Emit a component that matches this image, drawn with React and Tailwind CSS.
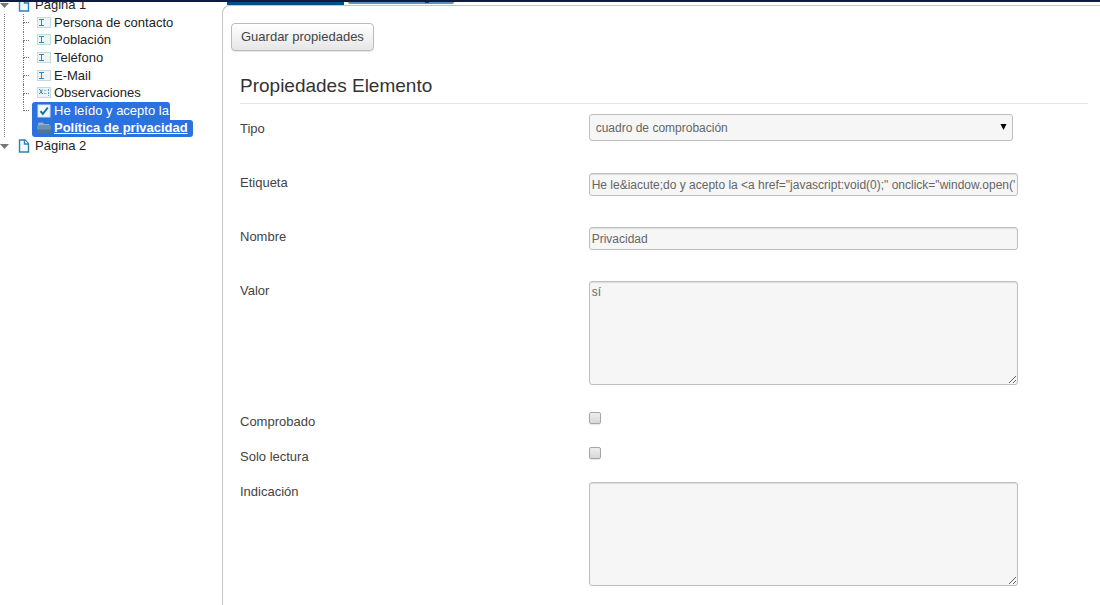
import { useState } from 'react'

const FIELDS = [
  { label: 'Persona de contacto', icon: 'input' },
  { label: 'Población', icon: 'input' },
  { label: 'Teléfono', icon: 'input' },
  { label: 'E-Mail', icon: 'input' },
  { label: 'Observaciones', icon: 'area' },
]

const LINK_HTML =
  'He le&iacute;do y acepto la <a href="javascript:void(0);" onclick="window.open(\'index.php\')">'

const controlClass =
  'block w-[86%] rounded-[3px] border border-[#bfbfbf] bg-[#f6f6f6] px-[2px] text-[12px] text-[#666] shadow-[inset_0_1px_1px_rgba(0,0,0,0.1)] outline-none'

function PageIcon() {
  return (
    <svg className="h-[14px] w-[12px] shrink-0" viewBox="0 0 12 14" fill="none">
      <path d="M1.5 1H7l3.5 3.5V13h-9z" fill="#f2f9fe" stroke="#2c81b8" strokeWidth="1.4" />
      <path d="M6.5 1v4h4" fill="#fff" stroke="#2c81b8" strokeWidth="1.4" />
    </svg>
  )
}

function FieldIcon({ area }) {
  return (
    <svg className="h-[12px] w-[14px] shrink-0" viewBox="0 0 14 12" fill="none">
      <rect x="0.5" y="0.5" width="13" height="10" fill="#edf5f6" stroke="#c5dadb" />
      {area ? (
        <>
          <path d="M2 2.5h1l2 4h1M5.500 2.500l-2.500 4H2" stroke="#3a8dc0" />
          <path d="M7 3.500h2.500M7 6.500h2.500" stroke="#8fb6cb" />
          <path d="M11.500 2v7" stroke="#5d9dc4" strokeDasharray="2 1" />
        </>
      ) : (
        <path d="M2 2.500h5M4.500 2v7M2 8.500h5" stroke="#3187bf" />
      )}
    </svg>
  )
}

function CheckIcon() {
  return (
    <svg className="h-[14px] w-[14px] shrink-0" viewBox="0 0 14 14" fill="none">
      <rect x="1" y="1" width="12" height="12" fill="#f3f8fa" stroke="#d3e2e8" />
      <path d="M3.500 7.200l2.300 2.800L10.800 3.500" stroke="#1c6ea8" strokeWidth="2" />
    </svg>
  )
}

function FolderIcon() {
  return (
    <svg className="h-[14px] w-[14px] shrink-0" viewBox="0 0 14 14">
      <path d="M1 4V2.500L2 1.500h4l1 1.500h5.500V6H1z" fill="#93b0c8" />
      <path d="M0 4.500h14l-.5 8H.5z" fill="#4f7699" />
      <path d="M0 4.500h14l-.2 4H.2z" fill="#6c92b3" />
    </svg>
  )
}

function Caret() {
  return (
    <svg className="h-[5px] w-[9px] shrink-0" viewBox="0 0 9 5">
      <path d="M0 0h9L4.500 5z" fill="#777" />
    </svg>
  )
}

function PageNode({ label }) {
  return (
    <div className="flex h-[18px] items-center">
      <Caret />
      <span className="ml-[9px] flex items-center gap-[5px]">
        <PageIcon />
        {label}
      </span>
    </div>
  )
}

function Branch() {
  return (
    <span className="flex w-[6px] shrink-0 flex-col self-stretch">
      <span className="flex-1 border-b border-l border-dotted border-[#777]" />
      <span className="flex-1 border-l border-dotted border-[#777]" />
    </span>
  )
}

function Sidebar() {
  return (
    <aside className="w-[222px] shrink-0 overflow-hidden text-[13px] leading-[18px] text-[#222]">
      <div className="-mt-[6px]">
        <PageNode label="Página 1" />
        <ul className="ml-[4px] grid h-[123px] grid-rows-7 border-l border-dotted border-[#777] pl-[18px]">
          {FIELDS.map((field) => (
            <li key={field.label} className="flex min-h-0 items-center">
              <Branch />
              <span className="ml-[8px] flex items-center gap-[3px] whitespace-nowrap">
                <FieldIcon area={field.icon === 'area'} />
                {field.label}
              </span>
            </li>
          ))}
          <li className="row-span-2 flex min-h-0">
            <span className="flex w-[6px] shrink-0 flex-col">
              <span className="h-[9px] border-b border-l border-dotted border-[#777]" />
            </span>
            <a
              href="#privacidad"
              className="ml-[3px] flex flex-col items-start whitespace-nowrap text-white"
            >
              <span className="flex h-[18px] items-center gap-[3px] rounded-t-[3px] bg-[#2b71e0] pr-px pl-[5px]">
                <CheckIcon />
                He leído y acepto la
              </span>
              <span className="flex h-[17px] items-center gap-[3px] rounded-[3px] rounded-tl-none bg-[#2b71e0] pr-[5px] pl-[5px] font-bold">
                <FolderIcon />
                <span className="underline">Política de privacidad</span>
              </span>
            </a>
          </li>
        </ul>
        <PageNode label="Página 2" />
      </div>
    </aside>
  )
}

function Row({ id, label, className = '', labelClass = '', children }) {
  return (
    <div className={`flex items-start ${className}`}>
      <label
        htmlFor={id}
        className={`w-[41%] shrink-0 pt-px text-[13px] leading-[18px] ${labelClass}`}
      >
        {label}
      </label>
      <div className="ml-px min-w-0 flex-1">{children}</div>
    </div>
  )
}

function Checkbox({ id }) {
  const [checked, setChecked] = useState(false)
  return (
    <input
      id={id}
      type="checkbox"
      checked={checked}
      onChange={(e) => setChecked(e.target.checked)}
      className="block h-[12px] w-[12px] appearance-none rounded-[2px] border border-[#a6a6a6] bg-linear-to-b from-[#eee] to-[#d8d8d8] shadow-[0_1px_1px_rgba(0,0,0,0.1)] checked:from-[#2b71e0] checked:to-[#2b71e0]"
    />
  )
}

export default function App() {
  return (
    <div className="flex min-h-screen flex-col bg-white font-['Liberation_Sans',Arial,sans-serif] text-[#444]">
      <header className="h-[2px] bg-[#0f1c3d]" />
      <div className="flex flex-1">
        <Sidebar />

        <main className="flex min-w-0 flex-1 flex-col">
          {/* Bottom edge of the tab strip */}
          <div className="flex h-[3px] items-start gap-[4px] pl-[5px]">
            <span className="h-[3px] w-[117px] bg-[#004f89]" />
            <span className="h-[2px] w-[106px] rounded-b-[2px] bg-[#5b93c0] pl-[77px]">
              <span className="block h-px w-[4px] bg-[#1d3d66]" />
            </span>
          </div>

          <section className="flex-1 rounded-tl-[8px] border-t border-l border-[#c4c4c4] pt-[17px] pr-3 pl-[8px]">
            <button
              type="button"
              className="block h-[28px] rounded-[4px] border border-[#bbb] bg-linear-to-b from-white to-[#e6e6e6] px-[9px] text-[13px] text-[#444] shadow-[0_1px_1px_rgba(0,0,0,0.1)]"
            >
              Guardar propiedades
            </button>

            <form className="mt-[23px] ml-[9px]" onSubmit={(e) => e.preventDefault()}>
              <h2 className="mb-[10px] border-b border-[#e5e5e5] pb-[5px] text-[19px] leading-[24px] text-[#333]">
                Propiedades Elemento
              </h2>

              <Row id="tipo" label="Tipo" className="mb-8" labelClass="mt-[5px]">
                <div className="relative w-[85%]">
                  <select
                    id="tipo"
                    className="block h-[27px] w-full appearance-none rounded-[3px] border border-[#bfbfbf] bg-[#f6f6f6] px-[6px] text-[12px] text-[#666] outline-none"
                  >
                    <option>cuadro de comprobación</option>
                  </select>
                  <svg
                    className="pointer-events-none absolute top-[10px] right-[6px] h-[6px] w-[7px]"
                    viewBox="0 0 7 6"
                  >
                    <path d="M0.500 0h6L3.500 6z" fill="#000" />
                  </svg>
                </div>
              </Row>
              <Row id="etiqueta" label="Etiqueta" className="mb-[31px]">
                <input
                  id="etiqueta"
                  type="text"
                  defaultValue={LINK_HTML}
                  className={`${controlClass} h-[23px]`}
                />
              </Row>
              <Row id="nombre" label="Nombre" className="mb-[31px]">
                <input
                  id="nombre"
                  type="text"
                  defaultValue="Privacidad"
                  className={`${controlClass} h-[23px]`}
                />
              </Row>
              <Row id="valor" label="Valor" className="mb-[27px]">
                <textarea
                  id="valor"
                  defaultValue="sí"
                  className={`${controlClass} h-[104px] resize py-[2px] leading-[16px]`}
                />
              </Row>
              <Row id="comprobado" label="Comprobado" className="mb-[16px]">
                <Checkbox id="comprobado" />
              </Row>
              <Row id="lectura" label="Solo lectura" className="mb-[16px]">
                <Checkbox id="lectura" />
              </Row>
              <Row id="indicacion" label="Indicación">
                <textarea
                  id="indicacion"
                  className={`${controlClass} h-[104px] resize py-[2px] leading-[16px]`}
                />
              </Row>
            </form>
          </section>
        </main>
      </div>
    </div>
  )
}
